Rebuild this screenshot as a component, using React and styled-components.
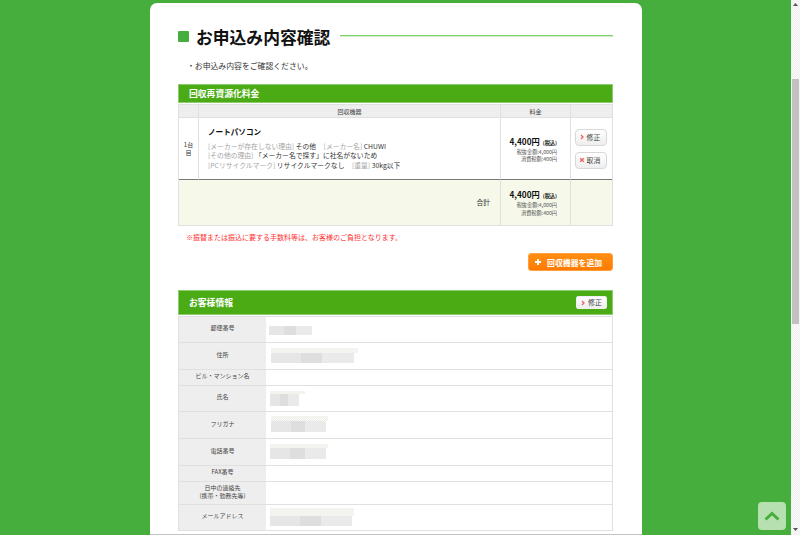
import React from 'react'
import styled, { createGlobalStyle } from 'styled-components'

const Global = createGlobalStyle`
  html, body { margin: 0; padding: 0; height: 100%; overflow: hidden; }
  body { font-family: "Noto Sans CJK JP", "Liberation Sans", sans-serif; color: #333; }
  * { box-sizing: border-box; }
`

const Screen = styled.div`
  position: relative;
  display: flex;
  width: 800px;
  height: 535px;
  overflow: hidden;
  background: #46ae3c;
`

const Stage = styled.main`
  flex: 1;
  padding: 3px 0 0 150px;
`

const Card = styled.div`
  width: 492px;
  height: 532px;
  padding: 25px 29px 0 28px;
  background: #fff;
  border-radius: 7px 7px 0 0;
  border-bottom: 1px solid #c4c4c4;
`

const TitleRow = styled.div`
  display: flex;
  align-items: center;
  height: 18px;
`

const Square = styled.span`
  width: 11px;
  height: 11px;
  margin: 0 7px 1px 0;
  background: #46ae3c;
  border-radius: 1px;
`

const Title = styled.h1`
  margin: 0 10px 0 0;
  font-size: 16.8px;
  line-height: 18px;
  font-weight: 700;
  color: #111;
  white-space: nowrap;
`

const TitleLine = styled.span`
  flex: 1;
  height: 2px;
  margin-bottom: 2px;
  background: linear-gradient(#7ed06a 50%, #d6eed0 50%);
`

const Lead = styled.p`
  margin: 14px 0 0 9px;
  font-size: 7.85px;
  line-height: 11px;
  color: #333;
`

const Band = styled.div`
  display: flex;
  align-items: center;
  justify-content: space-between;
  height: ${p => p.$h}px;
  margin-top: ${p => p.$top}px;
  padding: 0 5px 0 10px;
  background: #4aab14;
  border: 1px solid #8ccb70;
  font-size: 8.8px;
  font-weight: 700;
  color: #fff;
`

const FeeTable = styled.div`
  display: grid;
  grid-template-columns: 19px 302px 70px 42px;
  grid-template-rows: 14px 62px 45px;
  margin-top: 1px;
  border-left: 1px solid #e0e0e0;
  border-right: 1px solid #e0e0e0;
  border-bottom: 1px solid #e0e0e0;
`

const HeadCell = styled.div`
  display: flex;
  align-items: center;
  justify-content: center;
  background: #eee;
  border-top: 1px solid #e0e0e0;
  border-bottom: 1px solid #e0e0e0;
  border-left: ${p => (p.$first ? 'none' : '1px solid #e0e0e0')};
  font-size: 6px;
  color: #444;
`

const Cell = styled.div`
  display: flex;
  grid-column: ${p => (p.$span ? `span ${p.$span}` : 'auto')};
  flex-direction: ${p => (p.$col ? 'column' : 'row')};
  align-items: ${p => p.$align || 'center'};
  justify-content: ${p => p.$justify || 'center'};
  gap: ${p => p.$gap || 0}px;
  padding: ${p => p.$pad || 0};
  background: ${p => (p.$total ? '#f6f9ea' : '#fff')};
  border-left: ${p => (p.$first ? 'none' : '1px solid #e0e0e0')};
  border-bottom: ${p => (p.$rule ? '1px solid #777' : 'none')};
`

const RoundNo = styled.span`
  width: 10px;
  font-size: 6px;
  line-height: 8px;
  text-align: center;
  color: #333;
`

const Product = styled.div`
  font-size: 7.6px;
  line-height: 11px;
  font-weight: 700;
  color: #111;
  margin-bottom: 4.6px;
`

const Spec = styled.div`
  font-size: 6.8px;
  line-height: 9.7px;
  color: #333;
  white-space: nowrap;
`

const Key = styled.span`
  color: #a5a5a5;
  margin-left: ${p => p.$gap || 0}px;
`

const Price = styled.div`
  font-size: 8.2px;
  line-height: 10px;
  font-weight: 700;
  color: #111;
  text-align: right;
  small { font-size: 5.2px; margin-left: 3px; }
`

const Tax = styled.div`
  font-size: 5.2px;
  line-height: 7.3px;
  color: #555;
  text-align: right;
`

const TotalLabel = styled.span`
  font-size: 6.8px;
  color: #333;
`

const Small = styled.button`
  display: flex;
  align-items: center;
  gap: 2px;
  width: ${p => (p.$band ? 31 : 32)}px;
  height: ${p => (p.$band ? 13 : 17)}px;
  padding: 0 0 0 3px;
  background: linear-gradient(#fff, #eee);
  border: 1px solid ${p => (p.$band ? '#f0f0f0' : '#d8d8d8')};
  border-radius: ${p => (p.$band ? 2 : 4)}px;
  font-family: inherit;
  font-size: 6.9px;
  line-height: 1;
  color: #444;
  white-space: nowrap;
`

const Note = styled.p`
  margin: 6px 0 0 8px;
  font-size: 7px;
  line-height: 10px;
  color: #f33;
`

const AddRow = styled.div`
  display: flex;
  justify-content: flex-end;
  margin-top: 11px;
`

const AddButton = styled.button`
  display: flex;
  align-items: center;
  gap: 5px;
  width: 85px;
  height: 18px;
  padding: 0 0 0 5px;
  background: linear-gradient(#ff8f14, #ff7a00);
  border: 1px solid #ffa040;
  border-radius: 3px;
  font-family: inherit;
  font-size: 7.9px;
  font-weight: 700;
  color: #fff;
  white-space: nowrap;
`

const InfoTable = styled.div`
  display: grid;
  grid-template-columns: 87px 1fr;
  margin-top: 1px;
  border: 1px solid #e0e0e0;
  border-bottom: none;
`

const InfoLabel = styled.div`
  display: flex;
  align-items: center;
  justify-content: center;
  height: ${p => p.$h}px;
  padding-bottom: 2px;
  background: #eee;
  border-bottom: 1px solid #e0e0e0;
  font-size: 6px;
  line-height: 8.5px;
  color: #444;
  text-align: center;
`

const InfoValue = styled.div`
  display: flex;
  flex-direction: column;
  height: ${p => p.$h}px;
  padding: ${p => p.$top || 0}px 0 0 ${p => p.$pad || 4}px;
  border-bottom: 1px solid #e0e0e0;
`

// masked personal data: flat grey patches, with a dithered halo above
const Blur = styled.span`
  display: block;
  height: ${p => p.$h}px;
  width: ${p => p.$w}px;
  background: ${p => (p.$light
    ? 'repeating-conic-gradient(#ececea 0 25%, #fbfbf6 0 50%) 0 0 / 2px 2px'
    : 'linear-gradient(90deg, #e6e6e6 0 36%, #dedede 36% 62%, #eaeaea 62%)')};
`

const Scrollbar = styled.div`
  display: flex;
  flex-direction: column;
  width: 9px;
  padding: 0 1px 1px 0;
  background: repeating-conic-gradient(#efefef 0 25%, #fbfbfb 0 50%) 0 0 / 2px 2px;
  border-left: 1px solid #f4f4f4;
`

const Arrow = styled.span`
  display: flex;
  align-items: center;
  justify-content: center;
  height: 9px;
  svg { display: block; }
`

const Thumb = styled.div`
  height: 245px;
  margin-top: 70px;
  background: #c1c1c1;
`

const Track = styled.div`
  flex: 1;
`

const ToTop = styled.div`
  position: absolute;
  left: 758px;
  top: 502px;
  display: flex;
  align-items: center;
  justify-content: center;
  width: 28px;
  height: 28px;
  background: #b7e0b1;
  border-radius: 4px;
`

const Mark = ({ x }) => (
  <svg width="6" height="6" viewBox="0 0 6 6" fill="none" stroke="#f06060" strokeWidth="1.3">
    {x ? <path d="M1.2 1.2l3.6 3.6M4.8 1.2L1.2 4.8" /> : <path d="M2 1l2 2-2 2" />}
  </svg>
)

const rows = [
  { label: '郵便番号', h: 26, top: 9, pad: 3, blur: [{ w: 43, h: 8.5 }] },
  { label: '住所', h: 27, top: 5, pad: 5, blur: [{ w: 87, h: 5, light: true }, { w: 83, h: 10 }] },
  { label: 'ビル・マンション名', h: 16 },
  { label: '氏名', h: 26, top: 5, pad: 4, blur: [{ w: 35, h: 3, light: true }, { w: 29, h: 12 }] },
  { label: 'フリガナ', h: 27, top: 4, pad: 5, blur: [{ w: 57, h: 5, light: true }, { w: 55, h: 11 }] },
  { label: '電話番号', h: 27, top: 5, pad: 4, blur: [{ w: 58, h: 4, light: true }, { w: 56, h: 11 }] },
  { label: 'FAX番号', h: 16 },
  { label: '日中の連絡先\n(携帯・勤務先等)', h: 23 },
  { label: 'メールアドレス', h: 26, top: 3, pad: 4, blur: [{ w: 84, h: 8, light: true }, { w: 82, h: 10 }] },
]

function App() {
  return (
    <Screen>
      <Global />
      <Stage>
        <Card>
          <TitleRow>
            <Square />
            <Title>お申込み内容確認</Title>
            <TitleLine />
          </TitleRow>
          <Lead>・お申込み内容をご確認ください。</Lead>

          <Band $h={19} $top={13}>回収再資源化料金</Band>
          <FeeTable>
            <HeadCell $first />
            <HeadCell>回収機器</HeadCell>
            <HeadCell>料金</HeadCell>
            <HeadCell />

            <Cell $first $rule><RoundNo>1台目</RoundNo></Cell>
            <Cell $rule $col $align="flex-start" $pad="0 0 0 9px">
              <Product>ノートパソコン</Product>
              <Spec><Key>[メーカーが存在しない理由]</Key> その他 <Key $gap={6}>[メーカー名]</Key> CHUWI</Spec>
              <Spec><Key>[その他の理由]</Key> 「メーカー名で探す」に社名がないため</Spec>
              <Spec><Key>[PCリサイクルマーク]</Key> リサイクルマークなし <Key $gap={6}>[重量]</Key> 30kg以下</Spec>
            </Cell>
            <Cell $rule $col $align="flex-end" $pad="1px 13px 0 0">
              <Price>4,400円<small>(税込)</small></Price>
              <Tax>税抜金額:4,000円</Tax>
              <Tax>消費税額:400円</Tax>
            </Cell>
            <Cell $rule $col $gap={6} $pad="0 2px 0 0">
              <Small><Mark />修正</Small>
              <Small><Mark x />取消</Small>
            </Cell>

            <Cell $first $total $span={2} $justify="flex-end" $pad="0 10px 1px 0">
              <TotalLabel>合計</TotalLabel>
            </Cell>
            <Cell $total $col $align="flex-end" $pad="0 13px 0 0">
              <Price>4,400円<small>(税込)</small></Price>
              <Tax>税抜金額:4,000円</Tax>
              <Tax>消費税額:400円</Tax>
            </Cell>
            <Cell $total />
          </FeeTable>

          <Note>※振替または振込に要する手数料等は、お客様のご負担となります。</Note>

          <AddRow>
            <AddButton>
              <svg width="8" height="8" viewBox="0 0 8 8" fill="#fff"><path d="M3 1h2v2h2v2H5v2H3V5H1V3h2z" /></svg>
              回収機器を追加
            </AddButton>
          </AddRow>

          <Band $h={25} $top={19}>
            お客様情報
            <Small $band><Mark />修正</Small>
          </Band>
          <InfoTable>
            {rows.map(r => (
              <React.Fragment key={r.label}>
                <InfoLabel $h={r.h}>
                  <span>{r.label.split('\n').map(t => <div key={t}>{t}</div>)}</span>
                </InfoLabel>
                <InfoValue $h={r.h} $pad={r.pad} $top={r.top}>
                  {(r.blur || []).map((b, i) => <Blur key={i} $w={b.w} $h={b.h} $light={b.light} />)}
                </InfoValue>
              </React.Fragment>
            ))}
          </InfoTable>
        </Card>
      </Stage>
      <Scrollbar>
        <Arrow><svg width="5" height="3" viewBox="0 0 5 3" fill="#555"><path d="M2.5 0L5 3H0z" /></svg></Arrow>
        <Thumb />
        <Track />
        <Arrow><svg width="5" height="3" viewBox="0 0 5 3" fill="#555"><path d="M0 0h5L2.5 3z" /></svg></Arrow>
      </Scrollbar>
      <ToTop>
        <svg width="16" height="10" viewBox="0 0 16 10" fill="none" stroke="#46ae3c" strokeWidth="3">
          <path d="M1.5 8.5L8 2.5l6.5 6" />
        </svg>
      </ToTop>
    </Screen>
  )
}

export default App
